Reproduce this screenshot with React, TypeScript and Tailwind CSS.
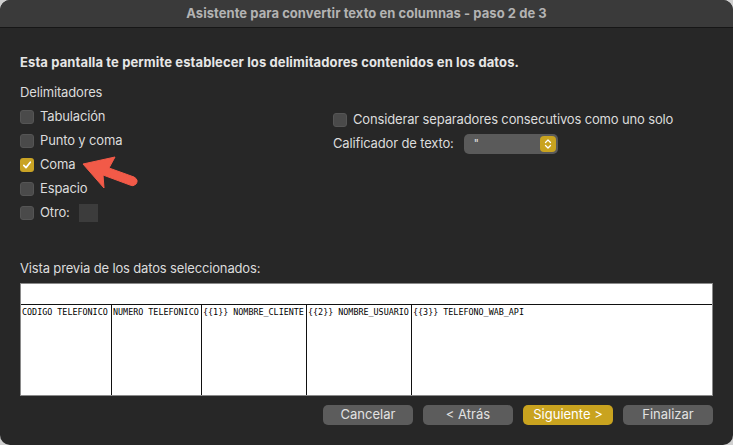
import React from 'react';

const font = { fontFamily: 'Inter, "Liberation Sans", sans-serif' };

function Check({ checked = false }: { checked?: boolean }) {
  return (
    <span
      className={
        'flex h-[14px] w-[14px] shrink-0 items-center justify-center rounded-[3px] ' +
        (checked ? 'bg-[#c9a325]' : 'bg-[#4a4a4a] border border-[#555]')
      }
    >
      {checked && (
        <svg width="10" height="10" viewBox="0 0 10 10">
          <path d="M1.8 5.3 L4 7.6 L8.3 2.2" fill="none" stroke="#fff" strokeWidth="1.7" strokeLinecap="round" strokeLinejoin="round" />
        </svg>
      )}
    </span>
  );
}

function Row({ label, checked, children }: { label: string; checked?: boolean; children?: React.ReactNode }) {
  return (
    <div className="flex h-[24px] items-center gap-[6px]">
      <Check checked={checked} />
      <span>{label}</span>
      {children}
    </div>
  );
}

function Btn({ label, primary }: { label: string; primary?: boolean }) {
  return (
    <button
      className={
        'h-[20px] w-[90px] rounded-[5px] text-[13px] leading-none ' +
        (primary ? 'bg-[#c9a31f] text-white' : 'bg-[#5c5c5c] text-[#e2e2e2]')
      }
    >
      {label}
    </button>
  );
}

const cols = [
  { w: 'w-[91px]', t: 'CODIGO TELEFONICO' },
  { w: 'w-[90px]', t: 'NUMERO TELEFONICO' },
  { w: 'w-[105px]', t: '{{1}} NOMBRE_CLIENTE' },
  { w: 'w-[105px]', t: '{{2}} NOMBRE_USUARIO' },
  { w: 'flex-1', t: '{{3}} TELEFONO_WAB_API' },
];

export default function App() {
  return (
    <div className="h-[445px] w-[733px] bg-[#cfcfcf]" style={font}>
      <div className="relative flex h-full w-full flex-col overflow-hidden rounded-[10px] bg-[#272727] text-[13px] tracking-[-0.15px] text-[#dcdcdc]">
        <div className="flex h-[28px] shrink-0 items-center justify-center border-b border-[#161616] bg-[#3a3a3a] text-[13px] font-bold tracking-[0.05px] text-[#b3b3b3]">
          Asistente para convertir texto en columnas - paso 2 de 3
        </div>

        <div className="flex flex-1 flex-col px-[20px]">
          <div className="mt-[25px] font-bold tracking-[0.12px] text-[#e6e6e6]">
            Esta pantalla te permite establecer los delimitadores contenidos en los datos.
          </div>

          <div className="mt-[10px] flex">
            <div className="w-[313px]">
              <div className="mb-[3px]">Delimitadores</div>
              <Row label="Tabulación" />
              <Row label="Punto y coma" />
              <Row label="Coma" checked />
              <Row label="Espacio" />
              <Row label="Otro:">
                <span className="ml-[3px] h-[18px] w-[19px] bg-[#3c3c3c]" />
              </Row>
            </div>
            <div className="pt-[25px]">
              <Row label="Considerar separadores consecutivos como uno solo" />
              <div className="flex h-[24px] items-center gap-[10px]">
                <span>Calificador de texto:</span>
                <div className="flex h-[20px] w-[94px] items-center justify-between rounded-[5px] bg-[#5a5a5a] pl-[10px] pr-[2px]">
                  <span className="text-[11px] leading-none text-[#e6e6e6]">"</span>
                  <span className="flex h-[16px] w-[16px] items-center justify-center rounded-[4px] bg-[#c9a31f]">
                    <svg width="8" height="12" viewBox="0 0 8 12">
                      <path d="M1.5 4.5 L4 2 L6.5 4.5 M1.5 7.5 L4 10 L6.5 7.5" fill="none" stroke="#fff" strokeWidth="1.3" strokeLinecap="round" strokeLinejoin="round" />
                    </svg>
                  </span>
                </div>
              </div>
            </div>
          </div>

          <div className="mt-[34px]">Vista previa de los datos seleccionados:</div>

          <div className="mt-[4px] flex h-[113px] flex-col border border-[#8a8a8a] bg-white">
            <div className="h-[21px] border-b border-[#111]" />
            <div className="flex flex-1 text-[8.4px] leading-[12px] tracking-normal text-black" style={{ fontFamily: '"DejaVu Sans Mono", monospace' }}>
              {cols.map((c, i) => (
                <div key={i} className={c.w + ' ' + (i < cols.length - 1 ? 'border-r border-[#111] ' : '') + 'overflow-hidden whitespace-nowrap pl-[1px] pt-[1px]'}>
                  {c.t}
                </div>
              ))}
            </div>
          </div>

          <div className="mt-[9px] flex justify-end gap-[10px] tracking-normal">
            <Btn label="Cancelar" />
            <Btn label="< Atrás" />
            <Btn label="Siguiente >" primary />
            <Btn label="Finalizar" />
          </div>
        </div>

        <svg className="absolute left-[80px] top-[152px]" width="62" height="40" viewBox="0 0 62 40">
          <path d="M3 12 L35 5 L29 16 L54 25 Q59 28 56 32 Q53 35 50 33 L23 23 L24 36 Z" fill="#f25a48" stroke="#f25a48" strokeWidth="1" strokeLinejoin="round" />
        </svg>
      </div>
    </div>
  );
}
